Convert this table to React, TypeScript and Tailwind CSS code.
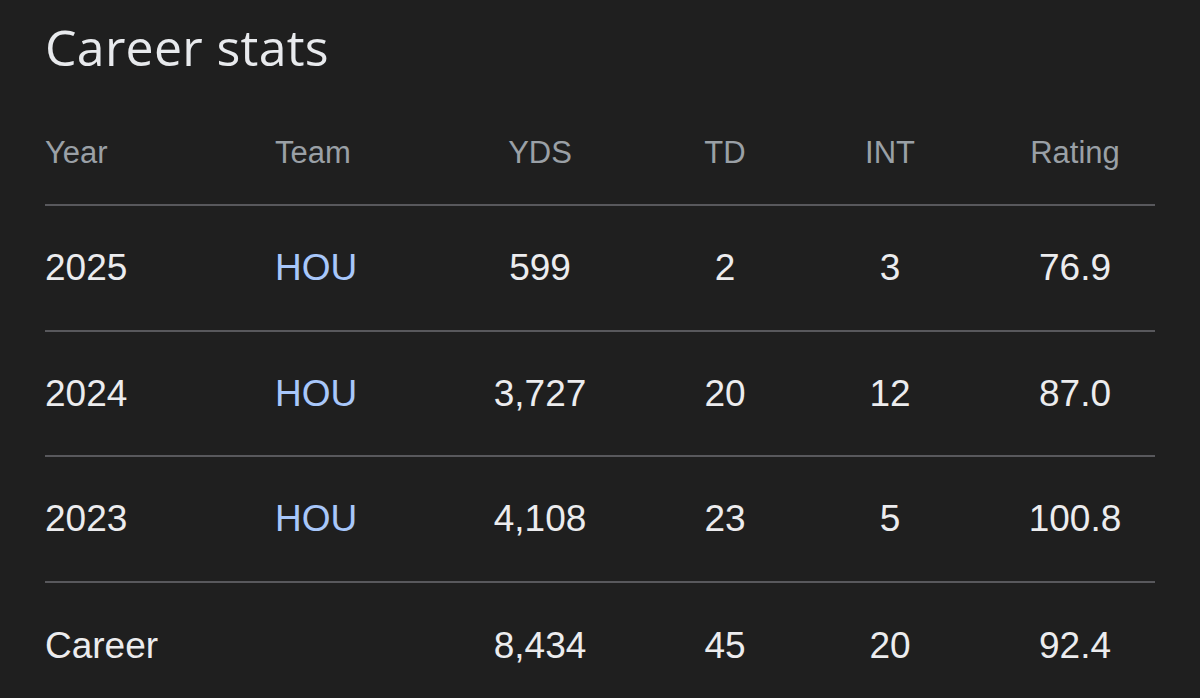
import React from 'react';

interface StatRow {
  year: string;
  team?: string;
  yds: string;
  td: string;
  int: string;
  rating: string;
}

const rows: StatRow[] = [
  { year: '2025', team: 'HOU', yds: '599', td: '2', int: '3', rating: '76.9' },
  { year: '2024', team: 'HOU', yds: '3,727', td: '20', int: '12', rating: '87.0' },
  { year: '2023', team: 'HOU', yds: '4,108', td: '23', int: '5', rating: '100.8' },
  { year: 'Career', yds: '8,434', td: '45', int: '20', rating: '92.4' },
];

const gridCols = 'grid grid-cols-[230px_180px_170px_200px_130px_1fr] items-center';

const App: React.FC = () => {
  return (
    <div
      className="min-h-screen w-full bg-[#1f1f1f] px-[45px] pt-[22px]"
      style={{ fontFamily: '"Liberation Sans", Arial, sans-serif' }}
    >
      {/* Title */}
      <h1
        className="h-[50px] text-[50px] leading-[50px] font-medium text-[#e8eaed] tracking-[0.3px]"
        style={{ fontFamily: '"Open Sans", sans-serif' }}
      >
        Career stats
      </h1>

      {/* Header row */}
      <div className={`${gridCols} mt-[31px] h-[103px] border-b-2 border-[#58585c] text-[31px] text-[#9aa0a6]`}>
        <div>Year</div>
        <div>Team</div>
        <div className="text-center">YDS</div>
        <div className="text-center">TD</div>
        <div className="text-center">INT</div>
        <div className="pl-[40px] text-center">Rating</div>
      </div>

      {/* Data rows */}
      {rows.map((row, i) => (
        <div
          key={row.year}
          className={`${gridCols} h-[125.5px] text-[37px] text-[#ececee] ${
            i < rows.length - 1 ? 'border-b-2 border-[#58585c]' : ''
          }`}
        >
          <div>{row.year}</div>
          <div className="text-[#a8c7fa]">{row.team}</div>
          <div className="text-center">{row.yds}</div>
          <div className="text-center">{row.td}</div>
          <div className="text-center">{row.int}</div>
          <div className="pl-[40px] text-center">{row.rating}</div>
        </div>
      ))}
    </div>
  );
};

export default App;
